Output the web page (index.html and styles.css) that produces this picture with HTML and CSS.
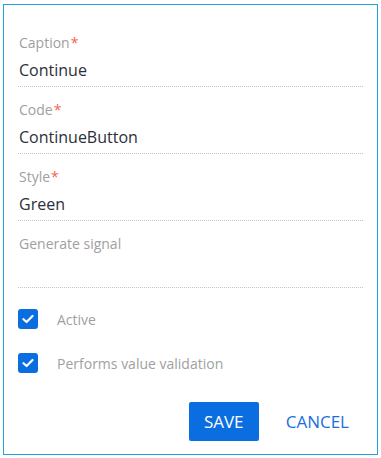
FILE: index.html
```html
<!DOCTYPE html>
<html lang="en">
<head>
    <meta charset="UTF-8">
    <meta name="viewport" content="width=device-width, initial-scale=1.0">
    <title>Button settings</title>
    <link rel="stylesheet" href="styles.css">
</head>
<body>
    <div class="panel">
        <div class="field">
            <div class="field-label">Caption<span class="required">*</span></div>
            <div class="field-value">Continue</div>
        </div>
        <div class="field">
            <div class="field-label">Code<span class="required">*</span></div>
            <div class="field-value">ContinueButton</div>
        </div>
        <div class="field">
            <div class="field-label">Style<span class="required">*</span></div>
            <div class="field-value">Green</div>
        </div>
        <div class="field">
            <div class="field-label">Generate signal</div>
            <div class="field-value"></div>
        </div>

        <div class="checks">
            <label class="check">
                <span class="check-box">
                    <svg width="12" height="10" viewBox="0 0 12 10"><path d="M1.5 5.2 L4.6 8 L10.5 2" fill="none" stroke="#fff" stroke-width="2.2" stroke-linecap="round" stroke-linejoin="round"/></svg>
                </span>
                <span class="check-text">Active</span>
            </label>
            <label class="check">
                <span class="check-box">
                    <svg width="12" height="10" viewBox="0 0 12 10"><path d="M1.5 5.2 L4.6 8 L10.5 2" fill="none" stroke="#fff" stroke-width="2.2" stroke-linecap="round" stroke-linejoin="round"/></svg>
                </span>
                <span class="check-text">Performs value validation</span>
            </label>
        </div>

        <div class="actions">
            <button class="btn btn-save">SAVE</button>
            <button class="btn btn-cancel">CANCEL</button>
        </div>
    </div>
</body>
</html>
```

FILE: styles.css
```css
body {
    margin: 0;
    font-family: 'Open Sans', 'Noto Sans', sans-serif;
    background-color: #fff;
}
.panel {
    box-sizing: border-box;
    width: 375px;
    height: 451px;
    margin: 4px 0 0 3px;
    padding: 28px 14px 13px 14px;
    border: 1px solid #1ea3dd;
    display: flex;
    flex-direction: column;
}
.field {
    border-bottom: 1px dotted #c4c4c4;
    padding-bottom: 4px;
    margin-bottom: 13px;
}
.field-label {
    font-size: 14px;
    line-height: 20px;
    color: #a0a0a0;
    padding-left: 1px;
}
.required {
    color: #f5634f;
    margin-left: 1px;
}
.field-value {
    margin-top: 5px;
    height: 24px;
    font-size: 16px;
    line-height: 24px;
    color: #2b2f3a;
    padding-left: 1px;
}
.checks {
    margin-top: 8px;
    display: flex;
    flex-direction: column;
    gap: 24px;
}
.check {
    display: flex;
    align-items: center;
    height: 20px;
}
.check-box {
    width: 20px;
    height: 20px;
    border-radius: 3px;
    background-color: #0b6ee0;
    display: flex;
    align-items: center;
    justify-content: center;
}
.check-text {
    margin-left: 19px;
    font-size: 14px;
    color: #a0a0a0;
}
.actions {
    margin-top: auto;
    display: flex;
    justify-content: flex-end;
    gap: 13px;
}
.btn {
    height: 39px;
    border: none;
    border-radius: 2px;
    font-family: 'Open Sans', 'Noto Sans', sans-serif;
    font-size: 17px;
    cursor: pointer;
}
.btn-save {
    width: 70px;
    background-color: #0b6ee0;
    color: #fff;
}
.btn-cancel {
    padding: 0 14px;
    background-color: transparent;
    color: #1a6fdc;
}
```
